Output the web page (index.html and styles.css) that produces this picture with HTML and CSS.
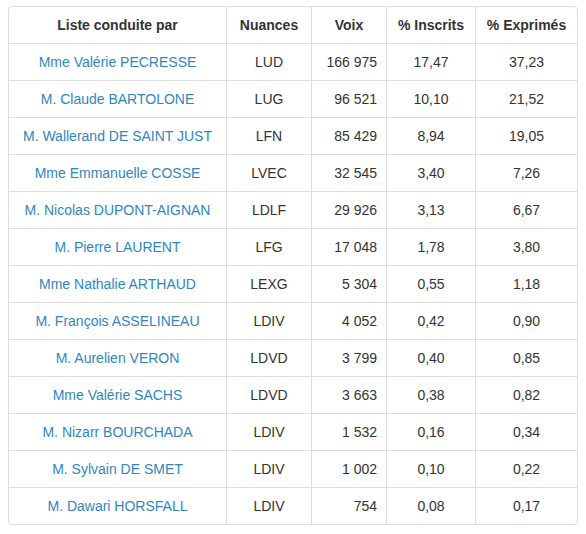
FILE: index.html
```html
<!DOCTYPE html>
<html lang="fr">
<head>
<meta charset="utf-8">
<link rel="stylesheet" href="styles.css">
</head>
<body>
<div class="panel">
<table class="results">
<colgroup>
<col class="c-name"><col class="c-nuance"><col class="c-voix"><col class="c-ins"><col class="c-exp">
</colgroup>
<thead>
<tr><th>Liste conduite par</th><th>Nuances</th><th>Voix</th><th>% Inscrits</th><th>% Exprimés</th></tr>
</thead>
<tbody>
<tr><td><a href="#">Mme Valérie PECRESSE</a></td><td>LUD</td><td class="num">166 975</td><td>17,47</td><td>37,23</td></tr>
<tr><td><a href="#">M. Claude BARTOLONE</a></td><td>LUG</td><td class="num">96 521</td><td>10,10</td><td>21,52</td></tr>
<tr><td><a href="#">M. Wallerand DE SAINT JUST</a></td><td>LFN</td><td class="num">85 429</td><td>8,94</td><td>19,05</td></tr>
<tr><td><a href="#">Mme Emmanuelle COSSE</a></td><td>LVEC</td><td class="num">32 545</td><td>3,40</td><td>7,26</td></tr>
<tr><td><a href="#">M. Nicolas DUPONT-AIGNAN</a></td><td>LDLF</td><td class="num">29 926</td><td>3,13</td><td>6,67</td></tr>
<tr><td><a href="#">M. Pierre LAURENT</a></td><td>LFG</td><td class="num">17 048</td><td>1,78</td><td>3,80</td></tr>
<tr><td><a href="#">Mme Nathalie ARTHAUD</a></td><td>LEXG</td><td class="num">5 304</td><td>0,55</td><td>1,18</td></tr>
<tr><td><a href="#">M. François ASSELINEAU</a></td><td>LDIV</td><td class="num">4 052</td><td>0,42</td><td>0,90</td></tr>
<tr><td><a href="#">M. Aurelien VERON</a></td><td>LDVD</td><td class="num">3 799</td><td>0,40</td><td>0,85</td></tr>
<tr><td><a href="#">Mme Valérie SACHS</a></td><td>LDVD</td><td class="num">3 663</td><td>0,38</td><td>0,82</td></tr>
<tr><td><a href="#">M. Nizarr BOURCHADA</a></td><td>LDIV</td><td class="num">1 532</td><td>0,16</td><td>0,34</td></tr>
<tr><td><a href="#">M. Sylvain DE SMET</a></td><td>LDIV</td><td class="num">1 002</td><td>0,10</td><td>0,22</td></tr>
<tr><td><a href="#">M. Dawari HORSFALL</a></td><td>LDIV</td><td class="num">754</td><td>0,08</td><td>0,17</td></tr>
</tbody>
</table>
</div>
</body>
</html>
```
FILE: styles.css
```css
html, body { background: #fff; }
body {
  margin: 6px 8px;
  font-family: "Liberation Sans", Arial, sans-serif;
  font-size: 14px;
  line-height: 20px;
  color: #333;
}
.panel {
  width: 570px;
  box-sizing: border-box;
  border: 1px solid #ddd;
  border-radius: 4px;
  overflow: hidden;
  box-shadow: 0 1px 1px rgba(0,0,0,0.05);
}
.results {
  width: 568px;
  table-layout: fixed;
  border-collapse: separate;
  border-spacing: 0;
}
.c-name { width: 218px; }
.c-nuance { width: 85px; }
.c-voix { width: 75px; }
.c-ins { width: 89px; }
.c-exp { width: 101px; }
.results th, .results td {
  padding: 8px;
  text-align: center;
  border-right: 1px solid #ddd;
  border-bottom: 1px solid #ddd;
  white-space: nowrap;
}
.results th { font-weight: bold; }
.results th:last-child, .results td:last-child { border-right: 0; }
.results tbody tr:last-child td { border-bottom: 0; }
.results td.num { text-align: right; padding-right: 9px; }
.results a { color: #2f86c2; text-decoration: none; }
```
